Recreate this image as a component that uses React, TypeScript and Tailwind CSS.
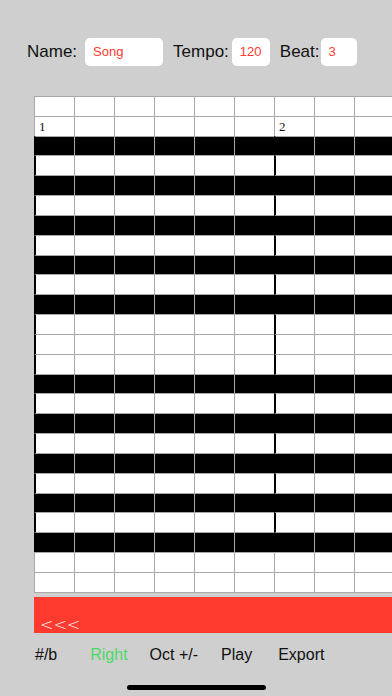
import React from 'react'

// B = black key row, W = white key row (top to bottom)
const NOTE_ROWS = 'BWBWBWBWBWWWBWBWBWBWBWW'.split('')
const COLS = 9
const BAR_COLS = [0, 6]
// bar lines stop before the last two rows
const BAR_ROWS = 21

function Cell({ dark, bar, label }: { dark?: boolean; bar?: boolean; label?: string }) {
  return (
    <div
      className={
        'box-border w-[40px] h-full shrink-0 border-t border-[#a9a9a9] ' +
        (bar ? 'border-l-2 border-l-black ' : 'border-l ') +
        (dark ? 'bg-black' : 'bg-white')
      }
    >
      {label && (
        <span className="block pl-[4px] text-[13px] leading-[19px] text-[#111]" style={{ fontFamily: '"Liberation Serif", serif' }}>
          {label}
        </span>
      )}
    </div>
  )
}

function Row({ children }: { children: React.ReactNode }) {
  return <div className="flex h-[19.84px]">{children}</div>
}

function Input({ value, width }: { value: string; width: string }) {
  return (
    <div className={`flex h-[28px] items-center rounded-[5px] bg-white pl-[8px] text-[13px] text-[#ff3b30] ${width}`}>
      {value}
    </div>
  )
}

export default function App() {
  const cols = Array.from({ length: COLS }, (_, i) => i)

  return (
    <div
      className="relative w-[392px] h-[696px] overflow-hidden bg-[#cfcfcf] text-[#111]"
      style={{ fontFamily: '"Liberation Sans", Arial, sans-serif' }}
    >
      {/* header */}
      <div className="mt-[38px] flex h-[28px] items-center text-[17px]">
        <span className="ml-[27px]">Name:</span>
        <div className="ml-[8px]">
          <Input value="Song" width="w-[78px]" />
        </div>
        <span className="ml-[10px]">Tempo:</span>
        <div className="ml-[3px]">
          <Input value="120" width="w-[38px]" />
        </div>
        <span className="ml-[10px]">Beat:</span>
        <div className="ml-[1px]">
          <Input value="3" width="w-[36px]" />
        </div>
      </div>

      {/* piano roll */}
      <div className="mt-[30px] ml-[34px] flex w-[360px] flex-col border-b border-[#a9a9a9]">
        <Row>
          {cols.map((c) => (
            <Cell key={c} />
          ))}
        </Row>
        <Row>
          {cols.map((c) => (
            <Cell key={c} label={c === 0 ? '1' : c === 6 ? '2' : undefined} />
          ))}
        </Row>
        {NOTE_ROWS.map((k, r) => (
          <Row key={r}>
            {cols.map((c) => (
              <Cell key={c} dark={k === 'B'} bar={r < BAR_ROWS && BAR_COLS.includes(c)} />
            ))}
          </Row>
        ))}
      </div>

      {/* scroll bar */}
      <div className="mt-[4px] ml-[34px] flex h-[36px] items-end bg-[#ff3b30] pl-[6px]">
        <span
          className="text-[16px] font-extralight leading-none text-white"
          style={{ fontFamily: '"DejaVu Sans", sans-serif' }}
        >
          &lt;&lt;&lt;
        </span>
      </div>

      {/* toolbar */}
      <div className="mt-[12px] flex h-[20px] text-[16px] leading-[20px]">
        <span className="ml-[35px]">#/b</span>
        <span className="ml-[33px] text-[#4cd964]">Right</span>
        <span className="ml-[22px]">Oct +/-</span>
        <span className="ml-[23px]">Play</span>
        <span className="ml-[26px]">Export</span>
      </div>

      <div className="mx-auto mt-[20px] h-[5px] w-[139px] rounded-full bg-black" />
    </div>
  )
}
